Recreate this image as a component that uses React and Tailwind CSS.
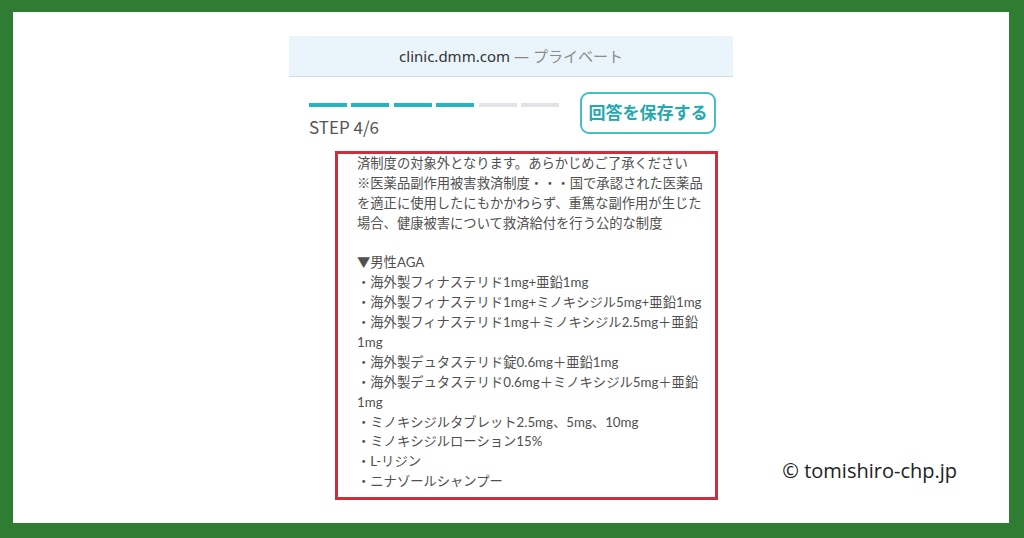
import React from "react";

const LINES = [
  "済制度の対象外となります。あらかじめご了承ください",
  "※医薬品副作用被害救済制度・・・国で承認された医薬品",
  "を適正に使用したにもかかわらず、重篤な副作用が生じた",
  "場合、健康被害について救済給付を行う公的な制度",
  "",
  "▼男性AGA",
  "・海外製フィナステリド1mg+亜鉛1mg",
  "・海外製フィナステリド1mg+ミノキシジル5mg+亜鉛1mg",
  "・海外製フィナステリド1mg＋ミノキシジル2.5mg＋亜鉛",
  "1mg",
  "・海外製デュタステリド錠0.6mg＋亜鉛1mg",
  "・海外製デュタステリド0.6mg＋ミノキシジル5mg＋亜鉛",
  "1mg",
  "・ミノキシジルタブレット2.5mg、5mg、10mg",
  "・ミノキシジルローション15%",
  "・L-リジン",
  "・ニナゾールシャンプー",
];

const STEPS = [true, true, true, true, false, false];

const App = () => {
  return (
    <div className="w-[1024px] h-[538px] bg-[#2e7d32] pt-[12px] pl-[13px] pr-[15px] pb-[15px] overflow-hidden">
      <div
        className="relative w-full h-full bg-white flex flex-col items-center"
        style={{ fontFamily: "Lato, 'Noto Sans CJK JP', sans-serif" }}
      >
        <div className="w-[444px] mt-[24px] flex flex-col">
          {/* browser bar */}
          <div
            className="h-[41px] bg-[#eaf5fb] border-b border-[#d5dde2] flex items-center justify-center text-[15px]"
            style={{ fontFamily: "'Noto Sans', 'Noto Sans CJK JP', sans-serif" }}
          >
            <span className="text-[#333]">clinic.dmm.com</span>
            <span className="text-[#8a8a8a] ml-[4px]">— プライベート</span>
          </div>

          {/* step row */}
          <div className="flex justify-between pl-[20px] pr-[17px] mt-[15px]">
            <div className="flex flex-col pt-[11px]">
              <div className="flex gap-[4.4px]">
                {STEPS.map((on, i) => (
                  <div
                    key={i}
                    className={on ? "w-[38px] h-[4px] bg-[#27b4bc]" : "w-[38px] h-[4px] bg-[#e1e3e6]"}
                  />
                ))}
              </div>
              <div
                className="text-[17px] text-[#555] mt-[9px] leading-[22px]"
                style={{ fontFamily: "'Noto Sans CJK JP', sans-serif" }}
              >
                STEP 4/6
              </div>
            </div>
            <button className="w-[136px] h-[42px] border-2 border-[#45bfc4] rounded-[9px] text-[#24a9b1] text-[17px] font-bold flex items-center justify-center">
              回答を保存する
            </button>
          </div>

          {/* notice box */}
          <div className="ml-[46px] mt-[13px] w-[383px] h-[349px] border-[3px] border-[#c9303b] pl-[19px] pb-[5px] text-[13.3px] leading-[19.9px] text-[#505050] overflow-hidden">
            {LINES.map((line, i) => (
              <div key={i} className="whitespace-nowrap h-[19.9px]">
                {line}
              </div>
            ))}
          </div>
        </div>

        <div
          className="absolute right-[52px] bottom-[37px] text-[20px] text-[#222]"
          style={{ fontFamily: "'Open Sans', sans-serif" }}
        >
          © tomishiro-chp.jp
        </div>
      </div>
    </div>
  );
};

export default App;
